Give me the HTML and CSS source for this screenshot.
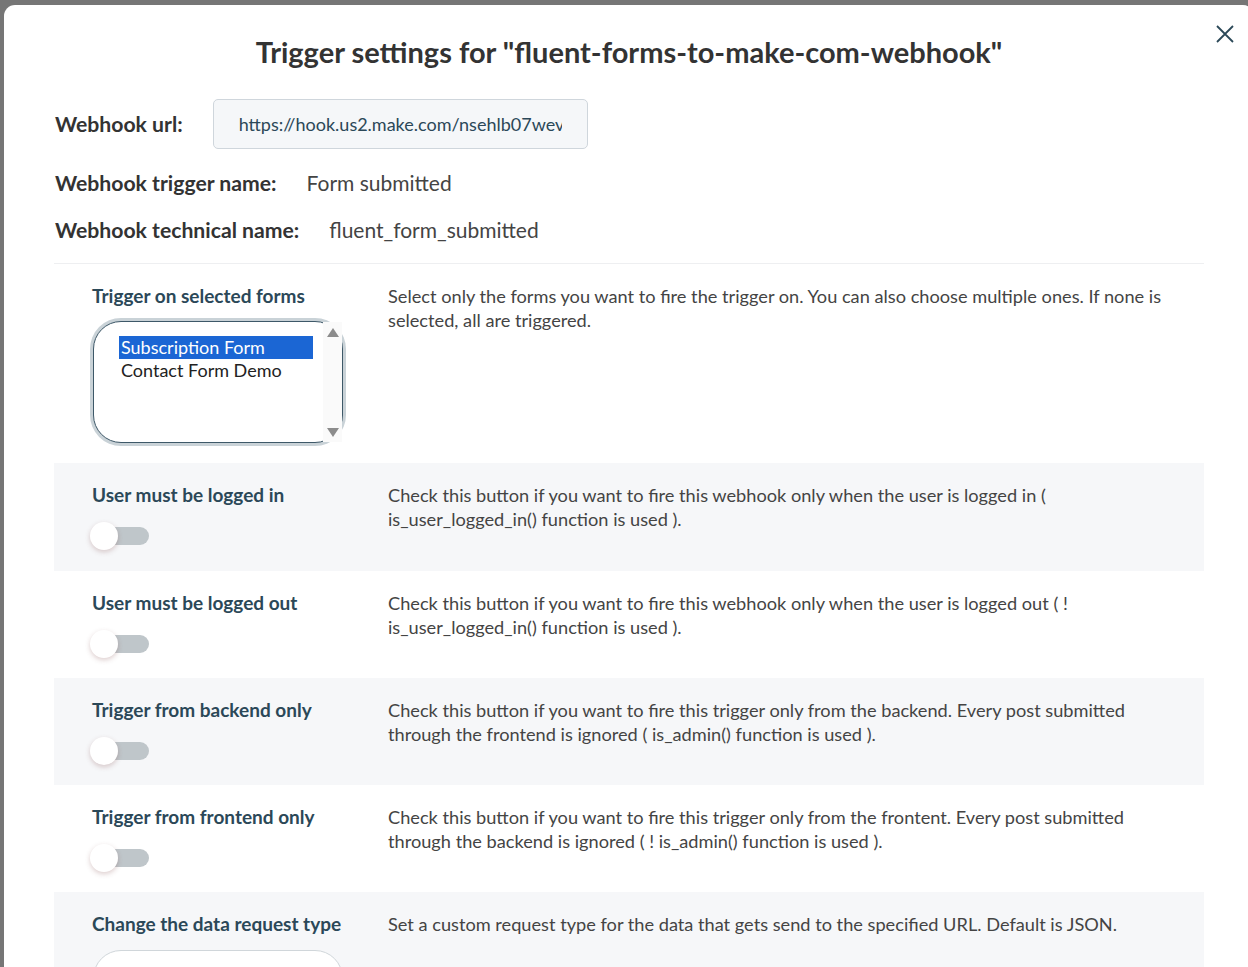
FILE: index.html
```html
<!DOCTYPE html>
<html lang="en">

<head>
    <meta charset="UTF-8" />
    <title>Trigger settings</title>
    <link rel="stylesheet" href="styles.css">
</head>

<body>
    <div class="modal">
        <button class="close-btn" aria-label="Close">
            <svg width="18" height="18" viewBox="0 0 18 18">
                <path d="M1 1 L17 17 M17 1 L1 17" stroke="#2b4858" stroke-width="1.8" fill="none" />
            </svg>
        </button>

        <h2 class="modal-title">Trigger settings for "fluent-forms-to-make-com-webhook"</h2>

        <div class="info-row url-row">
            <span class="info-label">Webhook url:</span>
            <input class="url-input" type="text" readonly value="https://hook.us2.make.com/nsehlb07wevx4k2jqp8mz1" />
        </div>
        <div class="info-row">
            <span class="info-label">Webhook trigger name:</span>
            <span class="info-value">Form submitted</span>
        </div>
        <div class="info-row">
            <span class="info-label">Webhook technical name:</span>
            <span class="info-value">fluent_form_submitted</span>
        </div>

        <div class="settings">
            <div class="setting">
                <div class="setting-left">
                    <div class="setting-label">Trigger on selected forms</div>
                    <div class="listbox">
                        <div class="listbox-items">
                            <div class="listbox-item selected">Subscription Form</div>
                            <div class="listbox-item">Contact Form Demo</div>
                        </div>
                        <div class="listbox-scroll">
                            <span class="arrow-up"></span>
                            <span class="arrow-down"></span>
                        </div>
                    </div>
                </div>
                <p class="setting-desc">Select only the forms you want to fire the trigger on. You can also choose multiple ones. If none is selected, all are triggered.</p>
            </div>

            <div class="setting alt">
                <div class="setting-left">
                    <div class="setting-label">User must be logged in</div>
                    <div class="toggle"><span class="toggle-track"></span><span class="toggle-knob"></span></div>
                </div>
                <p class="setting-desc">Check this button if you want to fire this webhook only when the user is logged in ( is_user_logged_in() function is used ).</p>
            </div>

            <div class="setting">
                <div class="setting-left">
                    <div class="setting-label">User must be logged out</div>
                    <div class="toggle"><span class="toggle-track"></span><span class="toggle-knob"></span></div>
                </div>
                <p class="setting-desc">Check this button if you want to fire this webhook only when the user is logged out ( ! is_user_logged_in() function is used ).</p>
            </div>

            <div class="setting alt">
                <div class="setting-left">
                    <div class="setting-label">Trigger from backend only</div>
                    <div class="toggle"><span class="toggle-track"></span><span class="toggle-knob"></span></div>
                </div>
                <p class="setting-desc">Check this button if you want to fire this trigger only from the backend. Every post submitted through the frontend is ignored ( is_admin() function is used ).</p>
            </div>

            <div class="setting">
                <div class="setting-left">
                    <div class="setting-label">Trigger from frontend only</div>
                    <div class="toggle"><span class="toggle-track"></span><span class="toggle-knob"></span></div>
                </div>
                <p class="setting-desc">Check this button if you want to fire this trigger only from the frontent. Every post submitted through the backend is ignored ( ! is_admin() function is used ).</p>
            </div>

            <div class="setting alt">
                <div class="setting-left">
                    <div class="setting-label">Change the data request type</div>
                    <div class="select-box"></div>
                </div>
                <p class="setting-desc">Set a custom request type for the data that gets send to the specified URL. Default is JSON.</p>
            </div>
        </div>
    </div>
</body>

</html>
```
FILE: styles.css
```css
html,
body {
    margin: 0;
    padding: 0;
    height: 967px;
    overflow: hidden;
}

body {
    background-color: #767676;
    font-family: 'Lato', sans-serif;
}

.modal {
    position: relative;
    width: 1250px;
    min-height: 1100px;
    margin: 5px 0 0 4px;
    padding: 29px 50px 0 50px;
    box-sizing: border-box;
    background-color: #ffffff;
    border-radius: 11px 11px 0 0;
}

.close-btn {
    position: absolute;
    top: 20px;
    right: 20px;
    padding: 0;
    border: none;
    background: none;
    cursor: pointer;
}

.close-btn svg {
    display: block;
}

.modal-title {
    margin: 0 0 29px;
    font-size: 29px;
    line-height: 36px;
    font-weight: 700;
    color: #333333;
    text-align: center;
}

.info-row {
    display: flex;
    align-items: center;
    gap: 30px;
    margin-bottom: 19px;
    padding-left: 1px;
    line-height: 28px;
}

.url-row {
    margin-bottom: 20px;
}

.info-label {
    font-size: 21.2px;
    font-weight: 700;
    color: #333333;
}

.info-value {
    font-size: 21px;
    color: #444444;
}

.url-input {
    width: 375px;
    height: 50px;
    box-sizing: border-box;
    padding: 0 25px;
    border: 1px solid #cfd6dc;
    border-radius: 5px;
    background-color: #f5f7f9;
    font-family: 'Lato', sans-serif;
    font-size: 18px;
    color: #2b4858;
    outline: none;
}

.settings {
    border-top: 1px solid #eeeff1;
}

.setting {
    display: flex;
    padding: 20px 29px 20.3px 38px;
}

.setting.alt {
    background-color: #f6f7f9;
}

.setting-left {
    width: 296px;
    flex-shrink: 0;
}

.setting-label {
    font-size: 19px;
    line-height: 24px;
    font-weight: 700;
    color: #2b4858;
}

.setting-desc {
    flex: 1;
    margin: 0;
    font-size: 18.2px;
    line-height: 24px;
    color: #444444;
}

/* multi select list */
.listbox {
    position: relative;
    width: 250px;
    height: 122px;
    margin: 13px 0 0 1px;
    box-sizing: border-box;
    border: 1.5px solid #3e5868;
    border-radius: 28px;
    box-shadow: 0 0 0 3px #c9d2d7;
    background-color: #ffffff;
}

.listbox-items {
    padding: 14px 0 0 25px;
}

.listbox-item {
    width: 194px;
    height: 23px;
    padding-left: 2px;
    box-sizing: border-box;
    font-size: 18px;
    line-height: 23px;
    color: #222222;
}

.listbox-item.selected {
    background-color: #1b66d4;
    color: #ffffff;
}

.listbox-scroll {
    position: absolute;
    top: 0;
    right: 0;
    bottom: 0;
    display: flex;
    flex-direction: column;
    justify-content: space-between;
    align-items: center;
    width: 19px;
    padding: 6px 0 5px;
    box-sizing: border-box;
    background-color: #fafafa;
}

.arrow-up,
.arrow-down {
    width: 0;
    height: 0;
    border-left: 6.5px solid transparent;
    border-right: 6.5px solid transparent;
}

.arrow-up {
    border-bottom: 9px solid #8c8c8c;
}

.arrow-down {
    border-top: 9px solid #8c8c8c;
}

/* toggles */
.toggle {
    position: relative;
    width: 59px;
    height: 28px;
    margin: 15px 0 0 -2px;
}

.toggle-track {
    position: absolute;
    left: 7px;
    top: 5px;
    width: 52px;
    height: 18px;
    border-radius: 9px;
    background-color: #bfc6ca;
}

.toggle-knob {
    position: absolute;
    left: 0;
    top: 0;
    width: 28px;
    height: 28px;
    border-radius: 50%;
    background-color: #ffffff;
    box-shadow: 0 2px 5px rgba(120, 60, 60, 0.25);
}

.select-box {
    width: 250px;
    height: 60px;
    margin: 14px 0 0 1px;
    box-sizing: border-box;
    border: 1px solid #d0d6da;
    border-radius: 28px;
    background-color: #ffffff;
}
```
